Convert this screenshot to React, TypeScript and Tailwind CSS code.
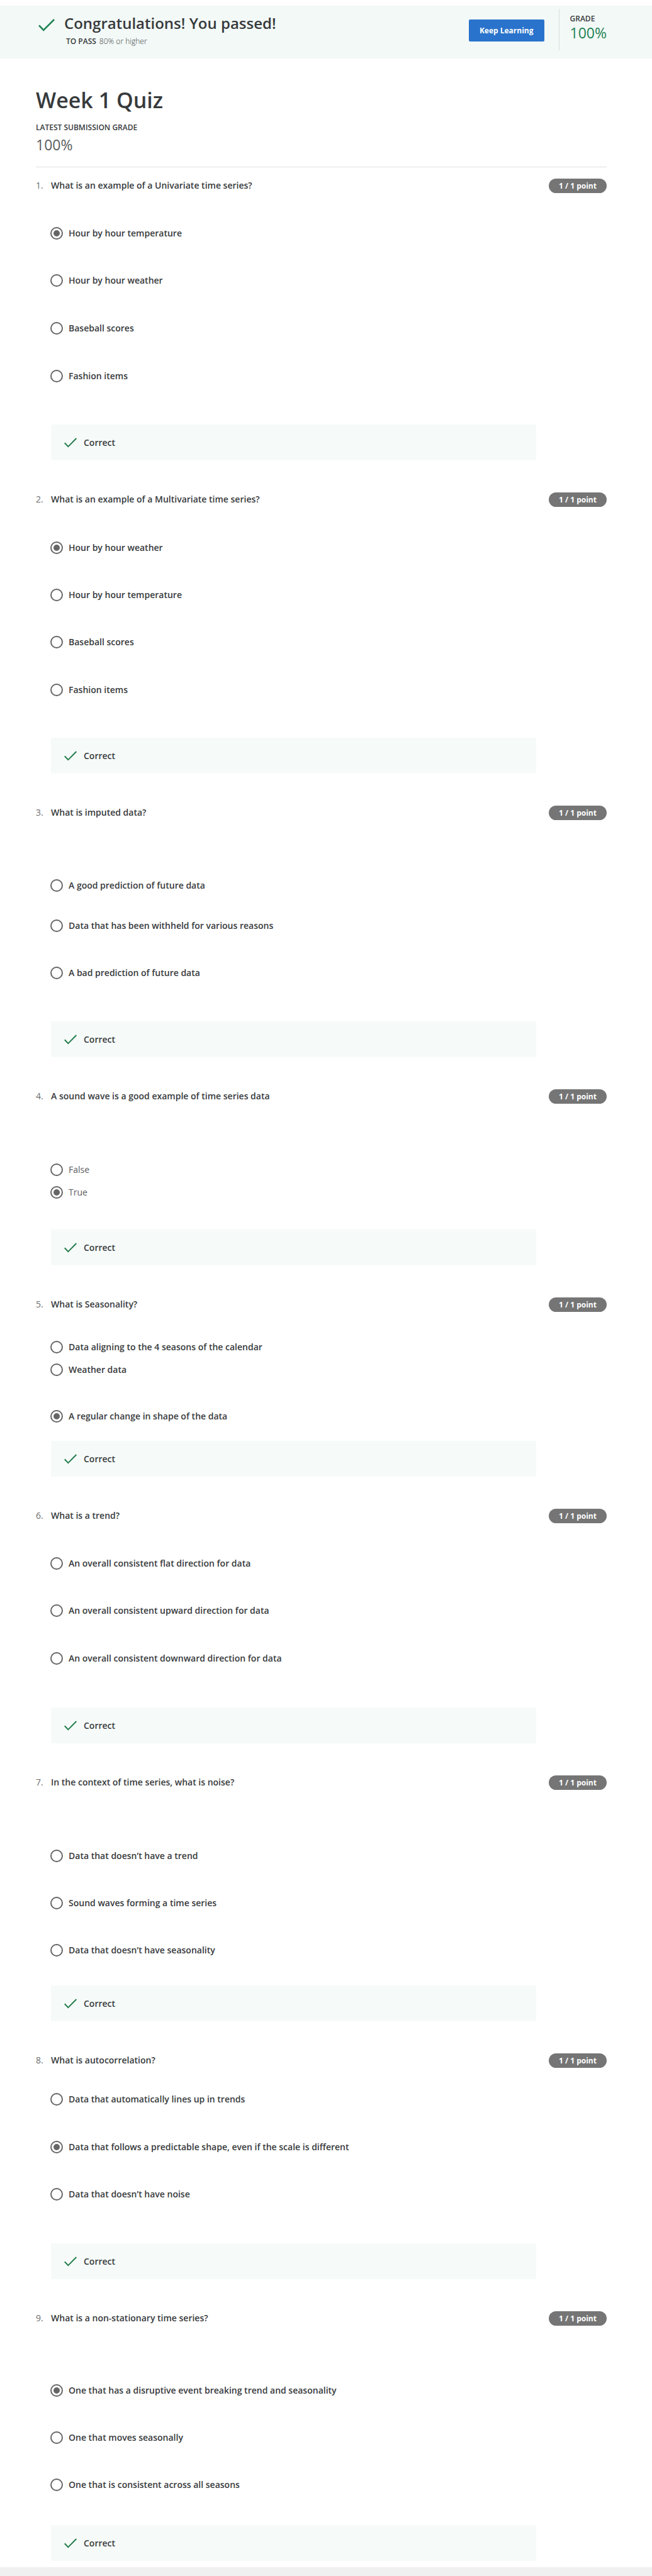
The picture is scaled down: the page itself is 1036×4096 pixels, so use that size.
type Option = { text: string; space: string; checked?: boolean; plain?: boolean };
type Question = { title: string; end: string; options: Option[] };

const questions: Question[] = [
  {
    title: "What is an example of a Univariate time series?",
    end: "mt-[67px]",
    options: [
      { text: "Hour by hour temperature", space: "mt-[54px]", checked: true },
      { text: "Hour by hour weather", space: "mt-[55px]" },
      { text: "Baseball scores", space: "mt-14" },
      { text: "Fashion items", space: "mt-14" },
    ],
  },
  {
    title: "What is an example of a Multivariate time series?",
    end: "mt-[66px]",
    options: [
      { text: "Hour by hour weather", space: "mt-[55px]", checked: true },
      { text: "Hour by hour temperature", space: "mt-[55px]" },
      { text: "Baseball scores", space: "mt-[55px]" },
      { text: "Fashion items", space: "mt-14" },
    ],
  },
  {
    title: "What is imputed data?",
    end: "mt-[67px]",
    options: [
      { text: "A good prediction of future data", space: "mt-[94px]" },
      { text: "Data that has been withheld for various reasons", space: "mt-11" },
      { text: "A bad prediction of future data", space: "mt-[55px]" },
    ],
  },
  {
    title: "A sound wave is a good example of time series data",
    end: "mt-[49px]",
    options: [
      { text: "False", space: "mt-[95px]", plain: true },
      { text: "True", space: "mt-4", checked: true, plain: true },
    ],
  },
  {
    title: "What is Seasonality?",
    end: "mt-[29px]",
    options: [
      { text: "Data aligning to the 4 seasons of the calendar", space: "mt-[46px]" },
      { text: "Weather data", space: "mt-4" },
      { text: "A regular change in shape of the data", space: "mt-[54px]", checked: true },
    ],
  },
  {
    title: "What is a trend?",
    end: "mt-[68px]",
    options: [
      { text: "An overall consistent flat direction for data", space: "mt-[54px]" },
      { text: "An overall consistent upward direction for data", space: "mt-[55px]" },
      { text: "An overall consistent downward direction for data", space: "mt-14" },
    ],
  },
  {
    title: "In the context of time series, what is noise?",
    end: "mt-[46px]",
    options: [
      { text: "Data that doesn’t have a trend", space: "mt-[95px]" },
      { text: "Sound waves forming a time series", space: "mt-[55px]" },
      { text: "Data that doesn’t have seasonality", space: "mt-[55px]" },
    ],
  },
  {
    title: "What is autocorrelation?",
    end: "mt-[68px]",
    options: [
      { text: "Data that automatically lines up in trends", space: "mt-10" },
      {
        text: "Data that follows a predictable shape, even if the scale is different",
        space: "mt-14",
        checked: true,
      },
      { text: "Data that doesn’t have noise", space: "mt-[55px]" },
    ],
  },
  {
    title: "What is a non-stationary time series?",
    end: "mt-[54px]",
    options: [
      {
        text: "One that has a disruptive event breaking trend and seasonality",
        space: "mt-[93px]",
        checked: true,
      },
      { text: "One that moves seasonally", space: "mt-[55px]" },
      { text: "One that is consistent across all seasons", space: "mt-[55px]" },
    ],
  },
];

function Check({ className }: { className: string }) {
  return (
    <svg viewBox="0 0 26 20" fill="none" stroke="currentColor" strokeWidth="2.6" className={className} aria-hidden="true">
      <path d="M1 10.3 L8.2 18 L25.1 1" />
    </svg>
  );
}

function OptionRow({ option, name }: { option: Option; name: string }) {
  return (
    <label className={`-ml-px flex h-5 items-center gap-[9px] ${option.space}`}>
      <input
        type="radio"
        name={name}
        defaultChecked={option.checked}
        className="grid size-5 shrink-0 appearance-none place-content-center rounded-full border-2 border-[#666] bg-white before:size-[10px] before:rounded-full checked:before:bg-[#666]"
      />
      <span className={option.plain ? "text-sm text-[#5a5c5e]" : "text-sm font-semibold"}>{option.text}</span>
    </label>
  );
}

function QuestionBlock({ question, number }: { question: Question; number: number }) {
  return (
    <section className="grid grid-cols-[24px_1fr_92px]">
      <span className="text-sm leading-[22px] text-[#6a6c6e]">{number}.</span>
      <h2 className="text-sm leading-[22px] font-semibold">{question.title}</h2>
      <span className="flex h-[23px] items-center justify-center rounded-full bg-[#757575] text-xs font-bold text-white">
        1 / 1 point
      </span>
      <div className="col-start-2 flex flex-col items-start">
        {question.options.map((option) => (
          <OptionRow key={option.text} option={option} name={`question-${number}`} />
        ))}
      </div>
      <div className={`col-start-2 mr-5 flex h-[57px] items-center gap-[11px] bg-[#f6fbf9] pl-[21px] ${question.end}`}>
        <Check className="h-4 w-5 text-[#237b4b]" />
        <span className="text-sm font-semibold">Correct</span>
      </div>
    </section>
  );
}

export default function App() {
  return (
    <div className="bg-white pt-[9px] font-['Open_Sans',sans-serif] text-[#373a3c]">
      <header className="flex h-[84px] items-start bg-[#f3f9f7] pr-[72px] pl-[61px]">
        <Check className="mt-[21px] h-5 w-[26px] shrink-0 text-[#1f8354]" />
        <div className="ml-[15px] flex-1 pt-3">
          <h1 className="text-2xl leading-8 font-semibold">Congratulations! You passed!</h1>
          <p className="mt-[3px] ml-[3px] flex gap-[5px] text-xs leading-5">
            <span className="font-semibold">TO PASS</span>
            <span className="font-light">80% or higher</span>
          </p>
        </div>
        <button
          type="button"
          className="mt-[22px] h-[35px] rounded-[2px] bg-[#2a73cc] px-[17px] text-xs font-bold whitespace-nowrap text-white"
        >
          Keep Learning
        </button>
        <div className="mt-[5px] ml-[23px] h-[66px] border-l border-[#dadedc] pt-2 pl-[17px]">
          <p className="text-xs leading-4 font-semibold">GRADE</p>
          <p className="text-[23px] leading-7 text-[#1f8354]">100%</p>
        </div>
      </header>

      <main className="pt-11 pr-[72px] pb-[10px] pl-[57px]">
        <h1 className="text-[34px] leading-[44px] font-semibold">Week 1 Quiz</h1>
        <p className="mt-3 text-xs leading-5 font-semibold">LATEST SUBMISSION GRADE</p>
        <p className="mt-[3px] text-[23px] leading-7 text-[#5a5c5e]">100%</p>
        <hr className="mt-[21px] border-t border-[#dedede]" />
        <div className="mt-[18px] flex flex-col gap-[51px]">
          {questions.map((question, index) => (
            <QuestionBlock key={question.title} question={question} number={index + 1} />
          ))}
        </div>
      </main>
      <div className="h-[14px] bg-[#f0f0f0]" />
    </div>
  );
}
